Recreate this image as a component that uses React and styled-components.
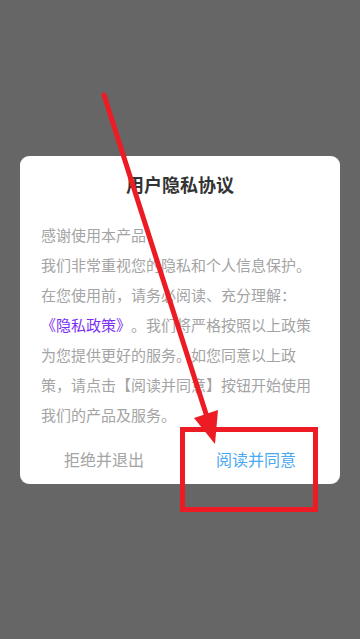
import React from "react";
import styled, { createGlobalStyle } from "styled-components";

const COLORS = {
  backdrop: "#666666",
  title: "#333333",
  text: "#a4a4a4",
  link: "#7b2ff5",
  agree: "#4aa9f2",
  annotation: "#ed1c24",
};

const GlobalStyles = createGlobalStyle`
  html, body {
    margin: 0;
    padding: 0;
  }
  body {
    font-family: "Noto Sans CJK SC", "Noto Sans", sans-serif;
    background: ${COLORS.backdrop};
  }
`;

const App = () => {
  return (
    <Wrapper>
      <GlobalStyles />
      <Dialog>
        <Title>用户隐私协议</Title>
        <Body>
          感谢使用本产品
          <br />
          我们非常重视您的隐私和个人信息保护。在您使用前，请务必阅读、充分理解：
          <Link>《隐私政策》</Link>
          。我们将严格按照以上政策为您提供更好的服务。如您同意以上政策，请点击【阅读并同意】按钮开始使用我们的产品及服务。
        </Body>
        <ButtonRow>
          <ActionButton>拒绝并退出</ActionButton>
          <ActionButton primary>阅读并同意</ActionButton>
        </ButtonRow>
      </Dialog>
      <Annotation viewBox="0 0 360 639" width="360" height="639">
        <line
          x1="104"
          y1="95"
          x2="208"
          y2="420"
          stroke={COLORS.annotation}
          strokeWidth="5"
          strokeLinecap="round"
        />
        <polygon points="215,444 194,418 218,410" fill={COLORS.annotation} />
        <rect
          x="182.5"
          y="429.5"
          width="133"
          height="80"
          fill="none"
          stroke={COLORS.annotation}
          strokeWidth="5"
        />
      </Annotation>
    </Wrapper>
  );
};

const Wrapper = styled.div`
  position: relative;
  min-height: 100vh;
  display: flex;
  align-items: center;
  justify-content: center;
  background: ${COLORS.backdrop};
`;

const Dialog = styled.div`
  width: 320px;
  background: #ffffff;
  border-radius: 9px;
  padding-top: 14px;
  display: flex;
  flex-direction: column;
`;

const Title = styled.h2`
  margin: 0;
  text-align: center;
  font-size: 18px;
  line-height: 28px;
  font-weight: 700;
  color: ${COLORS.title};
`;

const Body = styled.p`
  margin: 22px 0 0;
  padding: 0 21px;
  font-size: 15px;
  line-height: 30px;
  color: ${COLORS.text};
  line-break: strict;
  text-spacing-trim: space-all;
  font-feature-settings: "halt" 0, "chws" 0;
`;

const Link = styled.span`
  color: ${COLORS.link};
`;

const ButtonRow = styled.div`
  display: flex;
  padding: 4px 8px 0;
`;

const ActionButton = styled.button`
  flex: 1;
  height: 50px;
  border: none;
  background: transparent;
  font-family: inherit;
  font-size: 16px;
  color: ${(p) => (p.primary ? COLORS.agree : COLORS.text)};
  cursor: pointer;
`;

const Annotation = styled.svg`
  position: absolute;
  left: 0;
  top: 0;
  pointer-events: none;
`;

export default App;
